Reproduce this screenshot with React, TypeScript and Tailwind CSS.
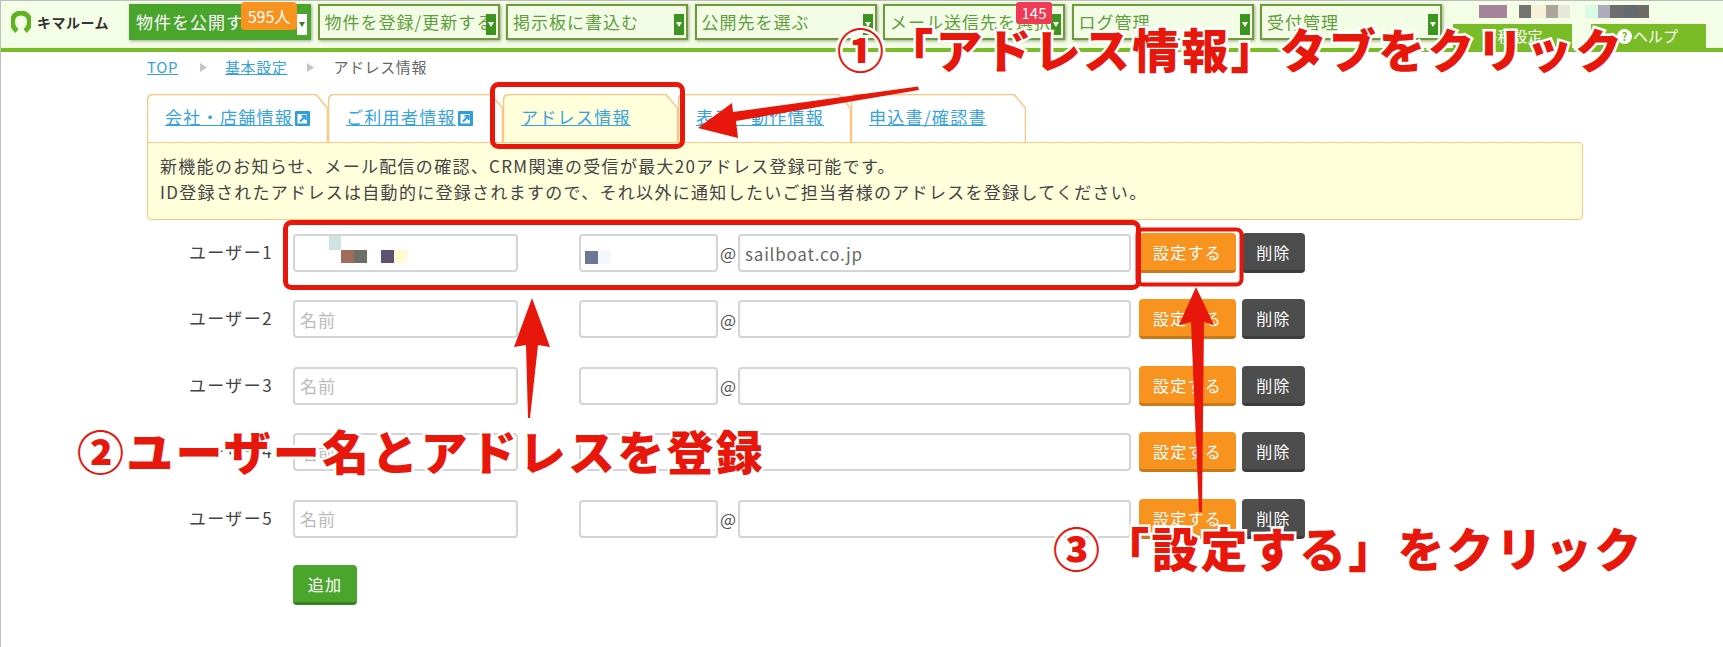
import { ReactNode } from 'react';

const navItems = [
  { label: '物件を公開する', primary: true },
  { label: '物件を登録/更新する' },
  { label: '掲示板に書込む' },
  { label: '公開先を選ぶ' },
  { label: 'メール送信先を選択' },
  { label: 'ログ管理' },
  { label: '受付管理' },
];

const tabs = [
  { label: '会社・店舗情報', width: 181, icon: true },
  { label: 'ご利用者情報', width: 175, icon: true },
  { label: 'アドレス情報', width: 175, active: true },
  { label: '表示・動作情報', width: 173 },
  { label: '申込書/確認書', width: 175 },
];

const users = ['ユーザー1', 'ユーザー2', 'ユーザー3', 'ユーザー4', 'ユーザー5'];

function NavButton({ label, primary }: { label: string; primary?: boolean }) {
  return (
    <div
      className={`relative flex h-[36px] w-[182px] items-center justify-between border-2 pl-[5px] pr-[3px] text-[17px] tracking-[1px] shadow-[1px_1px_3px_rgba(0,0,0,0.35)] ${
        primary
          ? 'border-[#4aa52d] bg-[#4aa52d] text-white'
          : 'border-[#6f9a3a] bg-[#f3fde6] text-[#5f9e3e]'
      }`}
    >
      <span className="whitespace-nowrap">{label}</span>
      <span
        className={`absolute right-[2px] top-[8px] flex h-[21px] w-[10px] items-center justify-center ${
          primary ? 'bg-white' : 'bg-[#3d9420]'
        }`}
      >
        <svg width="6" height="5" viewBox="0 0 6 5">
          <path d="M0 0h6L3 5z" fill={primary ? '#3d7a25' : '#fff'} />
        </svg>
      </span>
    </div>
  );
}

function LinkIcon() {
  return (
    <svg width="15" height="15" viewBox="0 0 15 15" className="ml-[2px] shrink-0">
      <rect width="15" height="15" rx="1" fill="#2f9fdc" />
      <rect x="2.500" y="3" width="9.500" height="9.500" fill="#fff" />
      <path d="M5 10.500 9.500 6M6.500 4.800h4.200v4.200" fill="none" stroke="#2f9fdc" strokeWidth="2" />
    </svg>
  );
}

function Tab({ label, width, icon, active }: { label: string; width: number; icon?: boolean; active?: boolean }) {
  return (
    <div className="relative flex h-[48px] items-center pl-[18px]" style={{ width }}>
      <svg width={width} height="49" className="absolute left-0 top-0">
        <path
          d={`M0.5 49V6Q0.5 0.5 6 0.5H${width - 12}L${width - 0.5} 14V49`}
          fill={active ? '#ffffdc' : '#fff'}
          stroke="#fdc57f"
          strokeWidth="1.5"
        />
      </svg>
      <span className="relative -mt-[2px] whitespace-nowrap text-[17px] tracking-[1.3px] text-[#36a3df] underline">
        {label}
      </span>
      {icon && (
        <span className="relative">
          <LinkIcon />
        </span>
      )}
    </div>
  );
}

function Crumb() {
  return (
    <svg width="7" height="9" viewBox="0 0 7 9">
      <path d="M0 0l7 4.500L0 9z" fill="#c4c4c4" />
    </svg>
  );
}

function Blocks({ items }: { items: string[] }) {
  return (
    <>
      {items.map((c, i) => (
        <span key={i} className={`block h-[13px] w-[13px] ${c}`} />
      ))}
    </>
  );
}

function FormButton({ children, className }: { children: ReactNode; className: string }) {
  return (
    <button
      className={`flex h-[40px] items-center justify-center rounded-[4px] border-b-[3px] pt-[1px] text-[16px] tracking-[1.2px] text-white ${className}`}
    >
      {children}
    </button>
  );
}

function UserRow({ label, index }: { label: string; index: number }) {
  const first = index === 0;
  const inputCls =
    'h-[38px] rounded-[4px] border-2 border-[#d4d4d4] bg-white px-[5px] text-[17px] text-[#666] placeholder:text-[#bbb] outline-none';
  return (
    <div className="flex h-[66.4px] items-start">
      <div className="w-[146px] whitespace-nowrap pr-[20px] pt-[5px] text-right text-[17px] tracking-[1.400px] text-[#444]">
        {label}
      </div>
      <div className="relative h-[38px] w-[225px]">
        <input readOnly placeholder={first ? '' : '名前'} className={`w-full tracking-[1px] ${inputCls}`} />
        {first && (
          <div className="absolute left-[36px] top-[2px] flex">
            <div className="flex flex-col">
              <span className="block h-[14px] w-[12px] bg-[#cfe3e5]" />
            </div>
            <div className="mt-[14px] flex">
              <Blocks items={['bg-[#a06c5c]', 'bg-[#6f6f6a]']} />
            </div>
            <div className="ml-[14px] mt-[14px] flex">
              <Blocks items={['bg-[#5e5070]', 'bg-[#fdfcd0]']} />
            </div>
          </div>
        )}
      </div>
      <div className="relative ml-[61px] h-[38px] w-[139px]">
        <input readOnly className={`w-full ${inputCls}`} />
        {first && (
          <div className="absolute left-[6px] top-[17px] flex">
            <Blocks items={['bg-[#6b7795]', 'bg-[#f4f8fd]']} />
          </div>
        )}
      </div>
      <div className="flex h-[38px] w-[20px] items-center justify-center text-[17px] text-[#555]">@</div>
      <input
        readOnly
        value={first ? 'sailboat.co.jp' : ''}
        className={`w-[393px] tracking-[0.8px] ${inputCls}`}
      />
      <FormButton className="-mt-[1px] ml-[8px] w-[97px] border-[#c77a1a] bg-[#f7931e]">設定する</FormButton>
      <FormButton className="-mt-[1px] ml-[6px] w-[63px] border-[#3c3c3c] bg-[#4d4d4d]">削除</FormButton>
    </div>
  );
}

function Callout({ className, children }: { className: string; children: ReactNode }) {
  return (
    <div
      className={`absolute whitespace-nowrap text-[47px] font-black leading-none tracking-[2.2px] text-[#e8170b] [-webkit-text-stroke:5px_white] [paint-order:stroke_fill] ${className}`}
    >
      {children}
    </div>
  );
}

export default function App() {
  return (
    <div className="relative h-[647px] w-[1723px] overflow-hidden border-l border-t border-[#bdbdbd] bg-white font-['Noto_Sans_CJK_JP',sans-serif]">
      {/* Header */}
      <header className="flex h-[51px] border-b-4 border-[#7abc27] bg-[#f4fde6] pl-[10px] pt-[3px]">
        <div className="flex h-[36px] w-[118px] items-center">
          <svg width="20" height="22" viewBox="0 0 20 22">
            <path d="M6 20C2 17 1.500 13.500 1.500 10.500 1.500 5.500 5 2 10 2s8.500 3.500 8.500 8.500C18.500 13.500 18 17 14 20" fill="none" stroke="#5fb31f" strokeWidth="5" />
          </svg>
          <span className="ml-[6px] whitespace-nowrap text-[14px] font-bold tracking-[0.5px] text-[#333]">キマルーム</span>
        </div>
        <nav className="flex gap-[6.500px]">
          {navItems.map((n) => (
            <NavButton key={n.label} label={n.label} primary={n.primary} />
          ))}
        </nav>
        <div className="ml-[11px] flex w-[253px] flex-col">
          <div className="ml-[26px] mt-[1px] flex h-[13px]">
            <span className="block h-[13px] w-[28px] bg-[#a5849b]" />
            <span className="ml-[12px] block h-[13px] w-[12px] bg-[#737373]" />
            <span className="block h-[13px] w-[15px] bg-[#f5f0d6]" />
            <span className="block h-[13px] w-[12px] bg-[#aea59a]" />
            <span className="block h-[13px] w-[12px] bg-[#e5e8da]" />
            <span className="ml-[15px] block h-[13px] w-[13px] bg-[#d9fbe6]" />
            <span className="block h-[13px] w-[12px] bg-[#adacba]" />
            <span className="block h-[13px] w-[14px] bg-[#6d6c6e]" />
            <span className="block h-[13px] w-[13px] bg-[#636a70]" />
            <span className="block h-[13px] w-[12px] bg-[#6d6a68]" />
          </div>
          <div className="mt-[6px] flex gap-[19px] text-[15px] text-white">
            <div className="flex h-[24px] w-[119px] items-center justify-center bg-[#7abc27]">各種設定</div>
            <div className="flex h-[24px] w-[115px] items-center justify-end gap-[1px] bg-[#7abc27] pr-[28px]">
              <span className="flex h-[15px] w-[15px] items-center justify-center rounded-full bg-white text-[11px] font-bold leading-none text-[#7abc27]">?</span>
              ヘルプ
            </div>
          </div>
        </div>
      </header>

      {/* Count badges */}
      <div className="absolute left-[240px] top-[1px] flex h-[28px] w-[56px] items-center justify-center rounded-[4px] bg-[#f7931e] text-[16px] text-white">595人</div>
      <div className="absolute left-[1015px] top-[1px] flex h-[22px] w-[36px] items-center justify-center rounded-[3px] bg-[#f03a55] text-[15px] text-white">145</div>

      {/* Main */}
      <main className="pl-[146px]">
        <div className="flex h-[29px] items-center pt-[1px] text-[15px] tracking-[0.6px] text-[#666]">
          <span className="text-[#36a3df] underline">TOP</span>
          <span className="ml-[22px] mr-[18px]"><Crumb /></span>
          <span className="text-[#36a3df] underline">基本設定</span>
          <span className="ml-[20px] mr-[19px]"><Crumb /></span>
          <span>アドレス情報</span>
        </div>
        <div className="mt-[13px] flex">
          {tabs.map((t) => (
            <Tab key={t.label} {...t} />
          ))}
        </div>
        <div className="relative h-[78px] w-[1436px] rounded-b-[4px] rounded-tr-[4px] border-[1.500px] border-[#fdc57f] bg-[#ffffdc] pl-[12px] pt-[10px] text-[17px] leading-[26px] tracking-[1.300px] text-[#444]">
          <p className="whitespace-nowrap">新機能のお知らせ、メール配信の確認、CRM関連の受信が最大20アドレス登録可能です。</p>
          <p className="whitespace-nowrap">ID登録されたアドレスは自動的に登録されますので、それ以外に通知したいご担当者様のアドレスを登録してください。</p>
        </div>
        <div className="mt-[14px]">
          {users.map((u, i) => (
            <UserRow key={u} label={u} index={i} />
          ))}
        </div>
        <div className="ml-[146px] -mt-[1px]">
          <FormButton className="w-[64px] border-[#37801f] bg-[#4aa52d]">追加</FormButton>
        </div>
      </main>

      {/* Annotations */}
      <svg width="1723" height="647" className="pointer-events-none absolute -left-[1px] -top-[1px]">
        <rect x="492.500" y="84.500" width="190" height="62" rx="6" fill="none" stroke="#e8170b" strokeWidth="5" />
        <rect x="285.500" y="222.500" width="853" height="65" rx="6" fill="none" stroke="#e8170b" strokeWidth="5" />
        <rect x="1137.500" y="229.500" width="104" height="55" rx="5" fill="none" stroke="#e8170b" strokeWidth="4" />
        <path d="M918 86.500 919 90 736 121 738 138 698 128 732 103 733 112z" fill="#e8170b" />
        <path d="M532 298 550 347 538 345 530 418 528 418 526 345 514 347z" fill="#e8170b" />
        <path d="M1196 287 1214 325 1204 322 1202 512 1199 512 1191 322 1179 325z" fill="#e8170b" />
      </svg>
      <Callout className="left-[836px] top-[23px]">①「アドレス情報」タブをクリック</Callout>
      <Callout className="left-[76px] top-[425px]">②ユーザー名とアドレスを登録</Callout>
      <Callout className="left-[1052px] top-[522px]">③「設定する」をクリック</Callout>
    </div>
  );
}
